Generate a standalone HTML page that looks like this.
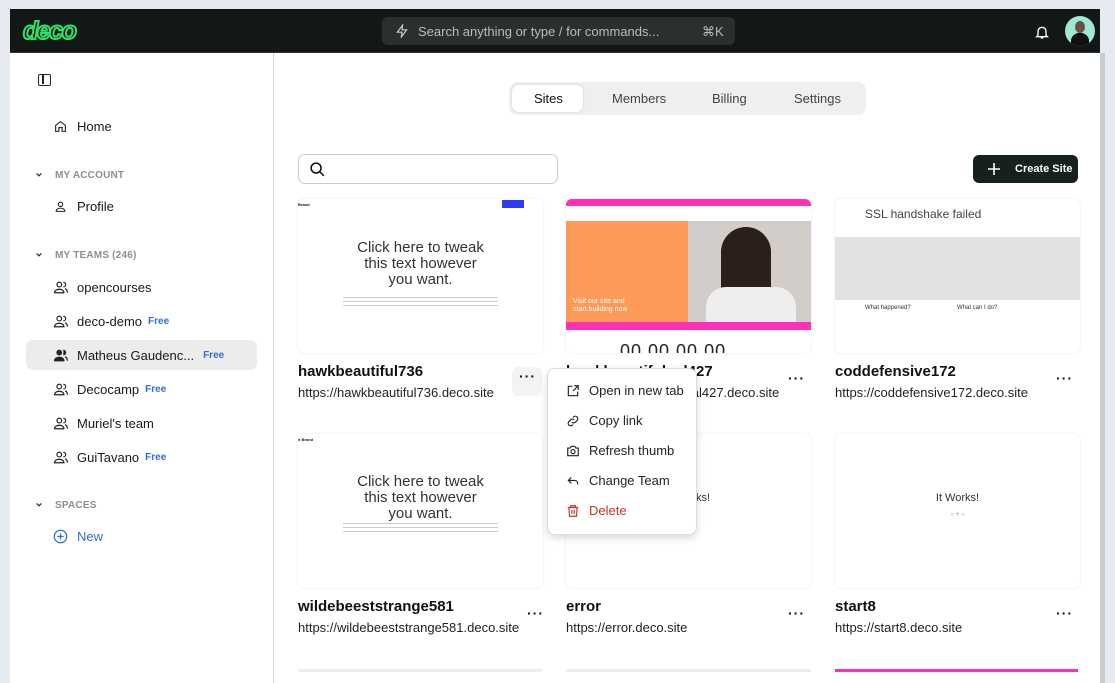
<!DOCTYPE html>
<html><head><meta charset="utf-8"><style>
*{box-sizing:border-box;margin:0;padding:0}
body{width:1115px;height:671px;overflow:hidden;background:#e6eaf1;font-family:"Liberation Sans",sans-serif;color:#111;position:relative}
.abs{position:absolute}
.hdr{left:10px;top:9px;width:1090px;height:44px;background:#121816;border-bottom:1px solid #333}
.side{left:10px;top:53px;width:264px;height:630px;background:#fff;border-right:1px solid #d4d6d8}
.main{left:274px;top:53px;width:826px;height:630px;background:#fff}
.sb{left:1100px;top:53px;width:5px;height:630px;background:#c9cccf}
.nav{font-size:13px;color:#1a1a1a;line-height:16px}
.sec{font-size:10px;font-weight:bold;color:#8a8f93;letter-spacing:.2px}
.free{font-size:10px;color:#2f6fd6;font-weight:bold;margin-left:6px}
.card{position:absolute;width:245px;height:154px;background:#fff;border-radius:6px;box-shadow:0 0 2px rgba(0,0,0,.12);overflow:hidden}
.t{position:absolute;font-size:15px;font-weight:bold}
.u{position:absolute;font-size:13px;color:#222}
.dots{position:absolute;font-size:14px;font-weight:bold;letter-spacing:1px}
.mi{position:absolute;left:18px;font-size:13px;color:#222;display:flex;align-items:center;gap:9px}
.team{position:absolute;left:44px;display:flex;align-items:center;font-size:13px;color:#1a1a1a;height:16px}
.team svg{margin-right:9px}
</style></head><body>
<div class="abs hdr">
 <div class="abs" style="left:13px;top:7px;font:italic bold 25px 'Liberation Sans',sans-serif;color:#0f1a12;-webkit-text-stroke:2px #2fe06a;letter-spacing:-1.5px;line-height:30px">deco</div>
 <div class="abs" style="left:372px;top:8px;width:353px;height:28px;background:#2a302e;border-radius:6px;color:#b8bdbb;font-size:13px">
  <svg class="abs" style="left:13px;top:7px" width="14" height="14" viewBox="0 0 24 24" fill="none" stroke="#ccc" stroke-width="2"><path d="M13 2 4 14h8l-1 8 9-12h-8z"/></svg>
  <span class="abs" style="left:36px;top:7px">Search anything or type / for commands...</span>
  <span class="abs" style="left:320px;top:7px">⌘K</span>
 </div>
 <svg class="abs" style="left:1024px;top:15px" width="16" height="16" viewBox="0 0 24 24" fill="none" stroke="#fff" stroke-width="2"><path d="M6 17V11a6 6 0 0 1 12 0v6l2 2H4zM10 21h4"/></svg>
 <div class="abs" style="left:1055px;top:7px;width:30px;height:30px;border-radius:50%;background:#9ee8d6;overflow:hidden"><div class="abs" style="left:10px;top:5px;width:10px;height:12px;border-radius:50%;background:#6b5040"></div><div class="abs" style="left:6px;top:17px;width:18px;height:16px;border-radius:8px 8px 0 0;background:#111"></div></div>
</div>
<div class="abs side">
 <div class="abs" style="left:28px;top:21px;width:13px;height:12px;border:1.5px solid #222;border-radius:2px"><div style="position:absolute;left:3px;top:0;width:1.5px;height:9px;background:#222"></div></div>
 <svg class="abs" style="left:44px;top:67px" width="13" height="13" viewBox="0 0 24 24" fill="none" stroke="#222" stroke-width="2"><path d="M3 10 12 3l9 7v11h-6v-7H9v7H3z"/></svg>
 <span class="abs nav" style="left:67px;top:66px">Home</span>
 <svg class="abs" style="left:25px;top:118px" width="8" height="8" viewBox="0 0 10 10" fill="none" stroke="#333" stroke-width="1.6"><path d="M2 3l3 3 3-3"/></svg><span class="abs sec" style="left:45px;top:117px">MY ACCOUNT</span>
 <svg class="abs" style="left:44px;top:147px" width="13" height="13" viewBox="0 0 24 24" fill="none" stroke="#222" stroke-width="2"><circle cx="12" cy="8" r="4"/><path d="M4 21c0-4 4-6 8-6s8 2 8 6z"/></svg>
 <span class="abs nav" style="left:67px;top:146px">Profile</span>
 <svg class="abs" style="left:25px;top:198px" width="8" height="8" viewBox="0 0 10 10" fill="none" stroke="#333" stroke-width="1.6"><path d="M2 3l3 3 3-3"/></svg><span class="abs sec" style="left:45px;top:197px">MY TEAMS (246)</span>
 <div class="abs" style="left:16px;top:287px;width:231px;height:30px;background:#ececec;border-radius:7px"></div>
 <div class="team" style="top:226px"><svg width="14" height="13" viewBox="0 0 24 22" fill="none" stroke="#222" stroke-width="2"><circle cx="9" cy="6" r="4"/><path d="M1 20c0-4 4-6 8-6s8 2 8 6zM16 2a4 4 0 0 1 0 8M19 13c2 1 4 3 4 7"/></svg>opencourses</div>
 <div class="team" style="top:260px"><svg width="14" height="13" viewBox="0 0 24 22" fill="none" stroke="#222" stroke-width="2"><circle cx="9" cy="6" r="4"/><path d="M1 20c0-4 4-6 8-6s8 2 8 6zM16 2a4 4 0 0 1 0 8M19 13c2 1 4 3 4 7"/></svg>deco-demo<span class="free">Free</span></div>
 <div class="team" style="top:294px"><svg width="14" height="13" viewBox="0 0 24 22" fill="#222" stroke="#222" stroke-width="2"><circle cx="9" cy="6" r="4"/><path d="M1 20c0-4 4-6 8-6s8 2 8 6zM16 2a4 4 0 0 1 0 8M19 13c2 1 4 3 4 7"/></svg>Matheus Gaudenc...<span class="free" style="margin-left:9px">Free</span></div>
 <div class="team" style="top:328px"><svg width="14" height="13" viewBox="0 0 24 22" fill="none" stroke="#222" stroke-width="2"><circle cx="9" cy="6" r="4"/><path d="M1 20c0-4 4-6 8-6s8 2 8 6zM16 2a4 4 0 0 1 0 8M19 13c2 1 4 3 4 7"/></svg>Decocamp<span class="free">Free</span></div>
 <div class="team" style="top:362px"><svg width="14" height="13" viewBox="0 0 24 22" fill="none" stroke="#222" stroke-width="2"><circle cx="9" cy="6" r="4"/><path d="M1 20c0-4 4-6 8-6s8 2 8 6zM16 2a4 4 0 0 1 0 8M19 13c2 1 4 3 4 7"/></svg>Muriel's team</div>
 <div class="team" style="top:396px"><svg width="14" height="13" viewBox="0 0 24 22" fill="none" stroke="#222" stroke-width="2"><circle cx="9" cy="6" r="4"/><path d="M1 20c0-4 4-6 8-6s8 2 8 6zM16 2a4 4 0 0 1 0 8M19 13c2 1 4 3 4 7"/></svg>GuiTavano<span class="free">Free</span></div>
 <svg class="abs" style="left:25px;top:448px" width="8" height="8" viewBox="0 0 10 10" fill="none" stroke="#333" stroke-width="1.6"><path d="M2 3l3 3 3-3"/></svg><span class="abs sec" style="left:45px;top:447px">SPACES</span>
 <svg class="abs" style="left:43px;top:476px" width="15" height="15" viewBox="0 0 24 24" fill="none" stroke="#2f6fd6" stroke-width="2"><circle cx="12" cy="12" r="10"/><path d="M12 7v10M7 12h10"/></svg>
 <span class="abs nav" style="left:67px;top:476px;color:#2f6fd6">New</span>
</div>
<div class="abs main">
 <div class="abs" style="left:235px;top:29px;width:357px;height:33px;background:#efefef;border-radius:9px;font-size:13px;color:#444">
  <div class="abs" style="left:3px;top:3px;width:71px;height:27px;background:#fff;border-radius:7px;box-shadow:0 0 2px rgba(0,0,0,.15)"></div>
  <span class="abs" style="left:25px;top:9px;color:#111">Sites</span><span class="abs" style="left:103px;top:9px">Members</span><span class="abs" style="left:203px;top:9px">Billing</span><span class="abs" style="left:285px;top:9px">Settings</span>
 </div>
 <div class="abs" style="left:24px;top:101px;width:260px;height:30px;border:1px solid #c9ccce;border-radius:7px">
  <svg class="abs" style="left:10px;top:6px" width="17" height="17" viewBox="0 0 24 24" fill="none" stroke="#111" stroke-width="2.2"><circle cx="10" cy="10" r="7"/><path d="m15 15 6 6"/></svg>
 </div>
 <div class="abs" style="left:699px;top:102px;width:105px;height:28px;background:#16201d;border-radius:6px;color:#fff;font-size:11px;font-weight:bold">
  <svg class="abs" style="left:15px;top:8px" width="12" height="12" viewBox="0 0 12 12" stroke="#fff" stroke-width="1.6"><path d="M6 0v12M0 6h12"/></svg><span class="abs" style="left:42px;top:8px;white-space:nowrap">Create Site</span>
 </div>
</div>
<div class="abs sb"></div>

<div class="card" style="left:298px;top:199px">
 <div class="abs" style="left:0;top:3px;font-size:4px;font-weight:bold">Brand</div>
 <div class="abs" style="left:204px;top:1px;width:22px;height:8px;background:#2d3cf5"></div>
 <div class="abs" style="left:0;top:41px;width:245px;text-align:center;font-size:15px;line-height:16px;color:#333">Click here to tweak<br>this text however<br>you want.</div>
 <div class="abs" style="left:45px;top:97px;width:155px;height:12px;background:repeating-linear-gradient(#fff 0 1px,#ccc 1px 2px,#fff 2px 4px)"></div>
</div>
<div class="card" style="left:566px;top:199px">
 <div class="abs" style="left:0;top:0;width:245px;height:7px;background:#ff2fb8"></div>
 <div class="abs" style="left:0;top:22px;width:122px;height:105px;background:#fd9a5a"></div>
 <div class="abs" style="left:122px;top:22px;width:123px;height:105px;background:#d2cdc8"></div>
 <div class="abs" style="left:155px;top:28px;width:50px;height:100px;background:#2b1f1a;border-radius:25px 25px 10px 10px"></div>
 <div class="abs" style="left:140px;top:88px;width:90px;height:40px;background:#eee;border-radius:20px 20px 0 0"></div>
 <div class="abs" style="left:7px;top:99px;color:#fff;font-size:7px;line-height:8px">Visit our site and<br>start building now</div>
 <div class="abs" style="left:0;top:123px;width:245px;height:8px;background:#ff2fb8"></div>
 <div class="abs" style="left:54px;top:142px;font-size:18px;color:#222;letter-spacing:1px">00 00 00 00</div>
</div>
<div class="card" style="left:835px;top:199px">
 <div class="abs" style="left:30px;top:8px;font-size:12px;color:#444">SSL handshake failed</div>
 <div class="abs" style="left:0;top:38px;width:245px;height:63px;background:#e2e2e2"></div>
 <div class="abs" style="left:30px;top:106px;font-size:6px;color:#333">What happened?</div>
 <div class="abs" style="left:122px;top:106px;font-size:6px;color:#333">What can I do?</div>
</div>
<div class="t" style="left:298px;top:363px">hawkbeautiful736</div><div class="u" style="left:298px;top:385px">https://hawkbeautiful736.deco.site</div>
<div class="abs" style="left:512px;top:367px;width:30px;height:29px;background:#f3f3f3;border-radius:6px"></div><div class="dots" style="left:519px;top:368px">···</div>
<div class="t" style="left:566px;top:363px">hawkbeautifulnal427</div><div class="u" style="left:566px;top:385px">https://hawkbeautifulnal427.deco.site</div><div class="dots" style="left:788px;top:370px">···</div>
<div class="t" style="left:835px;top:363px">coddefensive172</div><div class="u" style="left:835px;top:385px">https://coddefensive172.deco.site</div><div class="dots" style="left:1056px;top:370px">···</div>

<div class="card" style="left:298px;top:434px">
 <div class="abs" style="left:0;top:3px;font-size:4px;font-weight:bold">● Brand</div>
 <div class="abs" style="left:0;top:40px;width:245px;text-align:center;font-size:15px;line-height:16px;color:#333">Click here to tweak<br>this text however<br>you want.</div>
 <div class="abs" style="left:45px;top:88px;width:155px;height:12px;background:repeating-linear-gradient(#fff 0 1px,#ccc 1px 2px,#fff 2px 4px)"></div>
</div>
<div class="card" style="left:566px;top:434px"><div class="abs" style="left:0;top:58px;width:245px;text-align:center;font-size:11px;color:#333">It Works!</div></div>
<div class="card" style="left:835px;top:434px"><div class="abs" style="left:0;top:58px;width:245px;text-align:center;font-size:11px;color:#333">It Works!</div><div class="abs" style="left:0;top:78px;width:245px;text-align:center;font-size:6px;color:#888">○ + ○</div></div>
<div class="t" style="left:298px;top:598px">wildebeeststrange581</div><div class="u" style="left:298px;top:620px">https://wildebeeststrange581.deco.site</div><div class="dots" style="left:527px;top:605px">···</div>
<div class="t" style="left:566px;top:598px">error</div><div class="u" style="left:566px;top:620px">https://error.deco.site</div><div class="dots" style="left:788px;top:605px">···</div>
<div class="t" style="left:835px;top:598px">start8</div><div class="u" style="left:835px;top:620px">https://start8.deco.site</div><div class="dots" style="left:1056px;top:605px">···</div>
<div class="abs" style="left:835px;top:669px;width:243px;height:3px;background:#ff2fb8"></div>
<div class="abs" style="left:298px;top:669px;width:245px;height:3px;background:#eee"></div>
<div class="abs" style="left:566px;top:669px;width:245px;height:3px;background:#eee"></div>

<div class="abs" style="left:547px;top:368px;width:150px;height:167px;background:#fff;border:1px solid #ddd;border-radius:8px;box-shadow:0 3px 8px rgba(0,0,0,.15)">
 <div class="mi" style="top:14px"><svg width="14" height="14" viewBox="0 0 24 24" fill="none" stroke="#222" stroke-width="2"><path d="M14 3h7v7M21 3l-9 9M11 4H4v16h16v-7"/></svg>Open in new tab</div>
 <div class="mi" style="top:44px"><svg width="14" height="14" viewBox="0 0 24 24" fill="none" stroke="#222" stroke-width="2"><path d="M10 14a4 4 0 0 0 6 0l3-3a4 4 0 0 0-6-6l-1 1M14 10a4 4 0 0 0-6 0l-3 3a4 4 0 0 0 6 6l1-1"/></svg>Copy link</div>
 <div class="mi" style="top:74px"><svg width="14" height="14" viewBox="0 0 24 24" fill="none" stroke="#222" stroke-width="2"><path d="M3 7h4l2-3h6l2 3h4v13H3z"/><circle cx="12" cy="13" r="3.5"/></svg>Refresh thumb</div>
 <div class="mi" style="top:104px"><svg width="14" height="14" viewBox="0 0 24 24" fill="none" stroke="#222" stroke-width="2"><path d="M9 6 4 11l5 5M4 11h11a5 5 0 0 1 5 5v2"/></svg>Change Team</div>
 <div class="mi" style="top:134px;color:#c4352f"><svg width="14" height="14" viewBox="0 0 24 24" fill="none" stroke="#c4352f" stroke-width="2"><path d="M3 6h18M8 6V3h8v3M5 6l1 15h12l1-15M10 10v7M14 10v7"/></svg>Delete</div>
</div>
</body></html>
